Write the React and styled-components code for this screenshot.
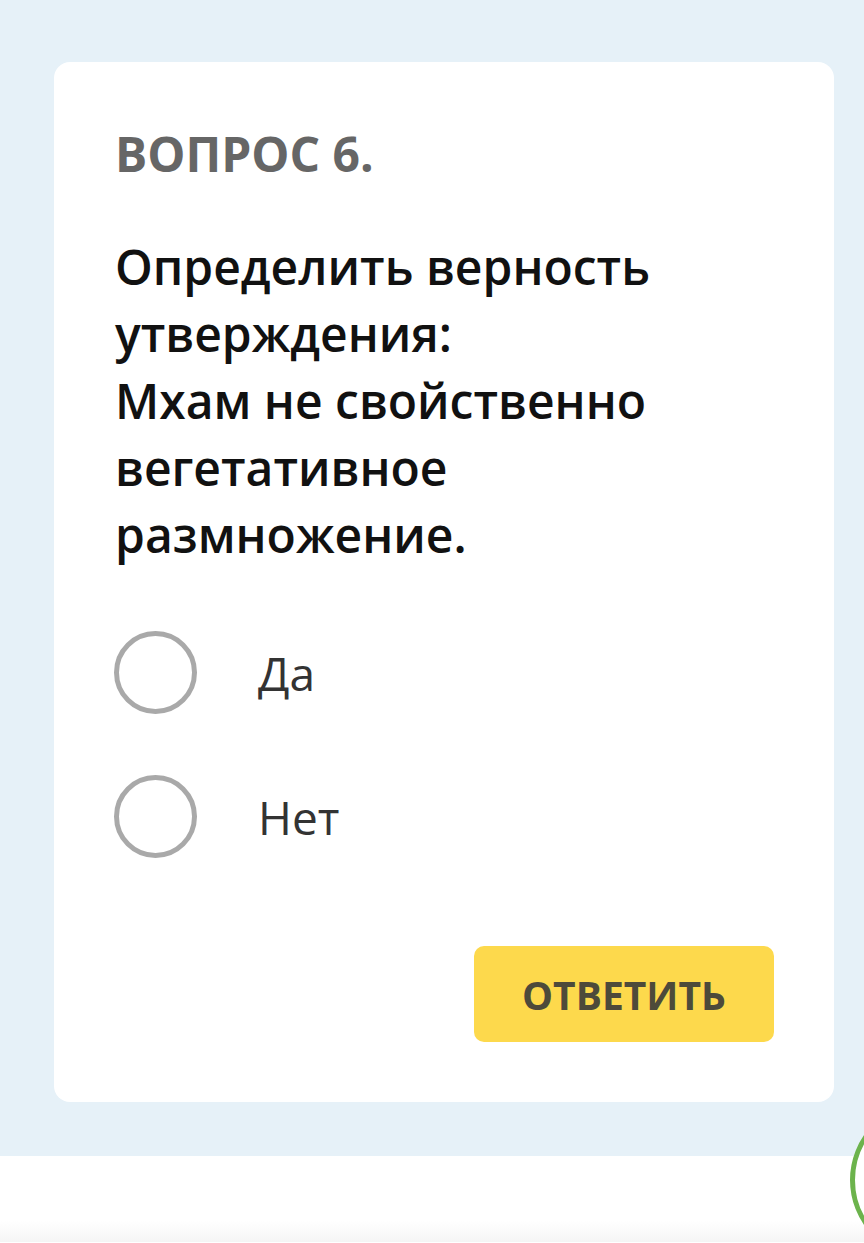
import styled, { createGlobalStyle } from "styled-components"

const Global = createGlobalStyle`
  html, body {
    margin: 0;
    padding: 0;
    background: #ffffff;
    font-family: "Open Sans", "Noto Sans", sans-serif;
  }
  #root {
    width: 864px;
    height: 1243px;
    overflow: hidden;
    position: relative;
  }
`

const Section = styled.div`
  background: #e6f1f8;
  padding: 62px 30px 54px 54px;
`

const Card = styled.div`
  width: 780px;
  box-sizing: border-box;
  background: #ffffff;
  border-radius: 16px;
  padding: 64px 60px 60px 61px;
  display: flex;
  flex-direction: column;
`

const Title = styled.h2`
  margin: 0;
  font-size: 48px;
  line-height: 56px;
  font-weight: 700;
  color: #666666;
  text-transform: uppercase;
`

const Question = styled.p`
  margin: 51px 0 0;
  font-size: 48px;
  line-height: 67px;
  font-weight: 600;
  color: #111111;
`

const Options = styled.div`
  margin-top: 63px;
  display: flex;
  flex-direction: column;
  gap: 61px;
  margin-left: -1px;
`

const Option = styled.label`
  display: flex;
  align-items: center;
  gap: 61px;
  height: 83px;
  cursor: pointer;
`

const Radio = styled.span`
  width: 83px;
  height: 83px;
  box-sizing: border-box;
  border-radius: 50%;
  border: 5px solid #a9a9a9;
  flex-shrink: 0;
`

const OptionText = styled.span`
  font-size: 46px;
  font-weight: 400;
  color: #333333;
`

const Actions = styled.div`
  margin-top: 88px;
  display: flex;
  justify-content: flex-end;
`

const Button = styled.button`
  width: 300px;
  height: 96px;
  border: none;
  border-radius: 10px;
  background: #fdd94c;
  color: #4d4a3a;
  font-family: "Open Sans", "Noto Sans", sans-serif;
  font-size: 39px;
  font-weight: 700;
  text-transform: uppercase;
  cursor: pointer;
`

const Footer = styled.div`
  height: 86px;
  background: linear-gradient(#ffffff 75%, #f5f5f5);
`

const FloatCircle = styled.div`
  position: absolute;
  left: 850px;
  top: 1101px;
  width: 158px;
  height: 158px;
  box-sizing: border-box;
  border-radius: 50%;
  border: 5px solid #6cb34c;
  background: #ffffff;
`

const answers = ["Да", "Нет"]

export default function App() {
  return (
    <>
      <Global />
      <Section>
        <Card>
          <Title>Вопрос 6.</Title>
          <Question>
            Определить верность утверждения:
            <br />
            Мхам не свойственно вегетативное размножение.
          </Question>
          <Options>
            {answers.map((a) => (
              <Option key={a}>
                <Radio />
                <OptionText>{a}</OptionText>
              </Option>
            ))}
          </Options>
          <Actions>
            <Button>Ответить</Button>
          </Actions>
        </Card>
      </Section>
      <Footer />
      <FloatCircle />
    </>
  )
}
